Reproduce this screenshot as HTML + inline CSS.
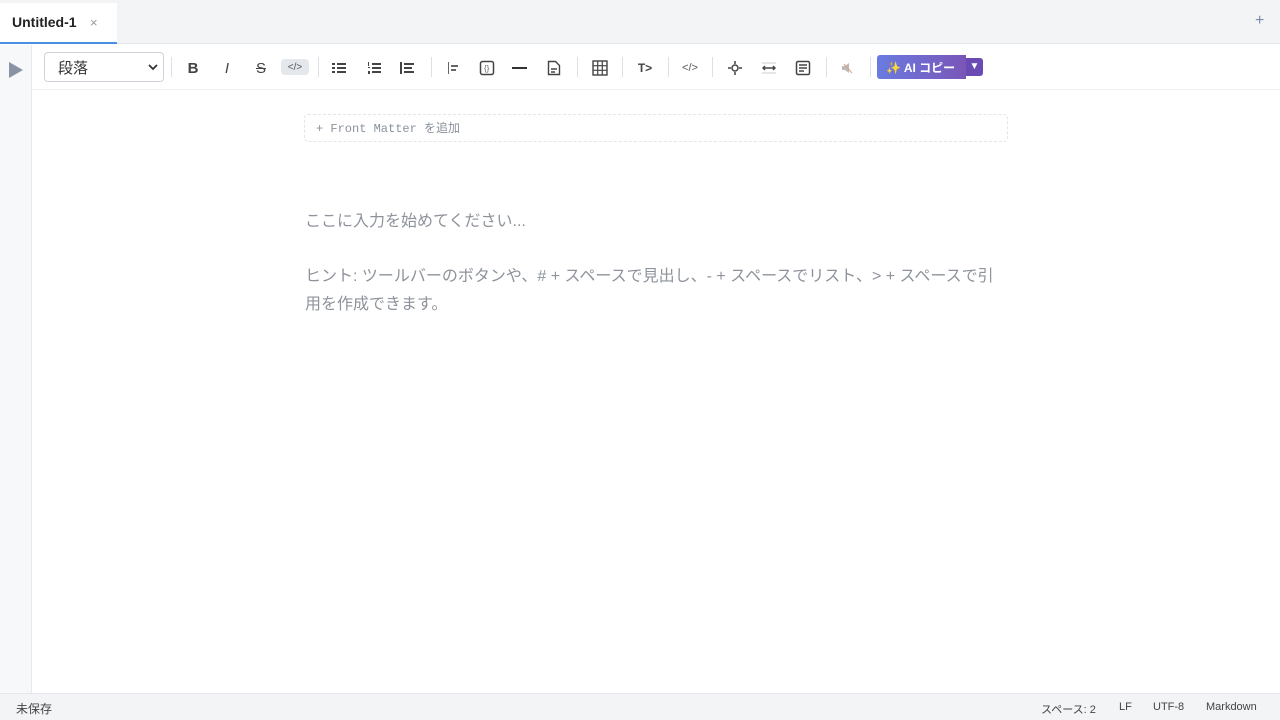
<!DOCTYPE html>
<html><head><meta charset="utf-8"><style>
*{box-sizing:border-box;margin:0;padding:0}
body{width:1280px;height:720px;overflow:hidden;background:#fff;font-family:"Liberation Sans","Noto Sans CJK JP",sans-serif;position:relative;color:#333}
.tabbar{position:absolute;left:0;top:0;width:1280px;height:44px;background:#f3f4f6;border-bottom:1px solid #e5e7eb}
.tab{position:absolute;left:0;top:3px;width:117px;height:41px;background:#fff;border-bottom:2px solid #4a90e2}
.tab .t{position:absolute;left:12px;top:11px;font-size:14px;font-weight:bold;color:#222}
.tab .x{position:absolute;left:90px;top:12px;font-size:13px;color:#999}
.plus{position:absolute;left:1255px;top:12px;font-size:16px;color:#7a8aa8}
.side{position:absolute;left:0;top:45px;width:32px;height:648px;background:#f7f8fa;border-right:1px solid #e8e9ec}
.side .tri{position:absolute;left:9px;top:17px;width:0;height:0;border-left:14px solid #8a93a6;border-top:8px solid transparent;border-bottom:8px solid transparent}
.tool{position:absolute;left:32px;top:45px;width:1248px;height:45px;border-bottom:1px solid #eceef1;background:#fff}
.sel{position:absolute;left:44px;top:52px;width:120px;height:30px;border:1px solid #cfd3d9;border-radius:4px;font-size:15px;padding:4px 0 0 13px;color:#333}
.sel svg{position:absolute;right:4px;top:10px}
.i{position:absolute;top:58px;width:20px;height:20px;display:flex;align-items:center;justify-content:center;color:#444}
.sep{position:absolute;top:57px;width:1px;height:20px;background:#dde0e5}
.ai{position:absolute;left:877px;top:55px;width:89px;height:24px;border-radius:3px 0 0 3px;background:linear-gradient(90deg,#6a7be0,#7a55b8);color:#fff;font-weight:bold;font-size:12px;padding:4px 0 0 9px;white-space:nowrap}
.dd{position:absolute;left:966px;top:58px;width:17px;height:18px;background:#6a4bb3;border-radius:0 3px 3px 0;color:#fff;font-size:10px;text-align:center;line-height:18px}
.fm{position:absolute;left:304px;top:114px;width:704px;height:28px;border:1px dashed #e3e5e9;border-radius:4px;font-family:"Liberation Mono","Noto Sans CJK JP",monospace;font-size:12px;color:#8a919c;padding:4px 0 0 11px}
.ph{position:absolute;left:305px;font-size:16px;color:#8e939b;font-family:"Liberation Sans","Noto Sans CJK JP",sans-serif}
.status{position:absolute;left:0;top:693px;width:1280px;height:27px;background:#f3f4f6;border-top:1px solid #e5e7eb;font-size:11px;color:#444}
.status span{position:absolute;top:7px}
</style></head><body>
<div class="tabbar"><div class="tab"><span class="t">Untitled-1</span><span class="x">×</span></div><span class="plus">+</span></div>
<div class="side"><div class="tri"></div></div>
<div class="tool"></div>
<div class="sel">段落<svg width="12" height="8" viewBox="0 0 12 8"><path d="M2 2l4 4 4-4" stroke="#333" stroke-width="1.8" fill="none"/></svg></div>
<div class="sep" style="left:171px"></div>
<div class="i" style="left:183px;font-weight:bold;font-size:15px">B</div>
<div class="i" style="left:217px;font-style:italic;font-size:15px">I</div>
<div class="i" style="left:251px;text-decoration:line-through;font-size:15px">S</div>
<div class="i" style="left:281px;top:59px;width:28px;height:16px;background:#e4e7ec;border-radius:4px;font-size:10px;color:#555">&lt;/&gt;</div>
<div class="sep" style="left:318px"></div>
<div class="i" style="left:329px"><svg width="16" height="14"><g fill="#444"><rect x="1" y="2" width="3" height="2"/><rect x="1" y="6" width="3" height="2"/><rect x="1" y="10" width="3" height="2"/><rect x="6" y="2" width="9" height="2"/><rect x="6" y="6" width="9" height="2"/><rect x="6" y="10" width="9" height="2"/></g></svg></div>
<div class="i" style="left:364px"><svg width="16" height="14"><g fill="#444"><rect x="2" y="1" width="1" height="4"/><rect x="2" y="6" width="2" height="1"/><rect x="2" y="10" width="2" height="3"/><rect x="6" y="2" width="9" height="2"/><rect x="6" y="6" width="9" height="2"/><rect x="6" y="10" width="9" height="2"/></g></svg></div>
<div class="i" style="left:397px"><svg width="16" height="14"><g fill="#444"><rect x="1" y="1" width="2" height="12"/><rect x="5" y="2" width="10" height="2"/><rect x="5" y="6" width="8" height="2"/><rect x="5" y="10" width="10" height="2"/></g></svg></div>
<div class="sep" style="left:431px"></div>
<div class="i" style="left:443px"><svg width="14" height="14"><g fill="#666"><rect x="2" y="1" width="1" height="12"/><rect x="5" y="4" width="7" height="2"/><rect x="5" y="8" width="5" height="2"/></g></svg></div>
<div class="i" style="left:477px"><svg width="16" height="16"><rect x="1.5" y="1.5" width="13" height="13" rx="2" stroke="#444" stroke-width="1.5" fill="none"/><text x="5" y="11" font-size="8" fill="#666">{}</text></svg></div>
<div class="i" style="left:510px"><svg width="16" height="4"><rect x="0" y="1" width="15" height="2" fill="#333"/></svg></div>
<div class="i" style="left:544px"><svg width="14" height="16"><path d="M1.5 1.5h7l4 4v9h-11z" stroke="#444" stroke-width="1.4" fill="none"/><path d="M4 9h6M4 12h4" stroke="#444" stroke-width="1.4"/></svg></div>
<div class="sep" style="left:577px"></div>
<div class="i" style="left:590px"><svg width="16" height="16"><rect x="1" y="1" width="14" height="14" stroke="#444" stroke-width="1.4" fill="none"/><path d="M1 5.7h14M1 10.3h14M5.7 1v14M10.3 1v14" stroke="#444" stroke-width="1.2"/></svg></div>
<div class="sep" style="left:622px"></div>
<div class="i" style="left:635px;font-size:12px;font-weight:bold">T&gt;</div>
<div class="sep" style="left:668px"></div>
<div class="i" style="left:680px;font-size:11px;color:#555">&lt;/&gt;</div>
<div class="sep" style="left:712px"></div>
<div class="i" style="left:725px"><svg width="16" height="16"><circle cx="8" cy="8" r="3" stroke="#444" stroke-width="1.5" fill="none"/><path d="M8 1v3M8 12v3M1 8h3M12 8h3" stroke="#444" stroke-width="1.5"/></svg></div>
<div class="i" style="left:759px"><svg width="16" height="12"><path d="M1 1h14M1 11h14" stroke="#ccc"/><path d="M2 6h12M4 4l-2 2 2 2M12 4l2 2-2 2" stroke="#444" stroke-width="1.4" fill="none"/></svg></div>
<div class="i" style="left:793px"><svg width="16" height="16"><rect x="1.5" y="1.5" width="13" height="13" rx="1.5" stroke="#444" stroke-width="1.5" fill="none"/><path d="M4 5h8M4 8h8M4 11h5" stroke="#444" stroke-width="1.4"/></svg></div>
<div class="sep" style="left:826px"></div>
<div class="i" style="left:837px"><svg width="14" height="14"><path d="M2 5h3l4-3v10l-4-3H2z" fill="#bbb"/><path d="M4 3l8 9" stroke="#e0a080" stroke-width="1"/></svg></div>
<div class="sep" style="left:870px"></div>
<div class="ai">✨ AI コピー</div>
<div class="dd">▼</div>
<div class="fm">+ Front Matter を追加</div>
<div class="ph" style="top:207px">ここに入力を始めてください...</div>
<div class="ph" style="top:263px;width:698px;line-height:28px">ヒント: ツールバーのボタンや、# + スペースで見出し、- + スペースでリスト、&gt; + スペースで引用を作成できます。</div>
<div class="status"><span style="left:16px;font-size:12px;top:6px">未保存</span><span style="left:1041px">スペース: 2</span><span style="left:1119px">LF</span><span style="left:1153px">UTF-8</span><span style="left:1206px">Markdown</span></div>
</body></html>
